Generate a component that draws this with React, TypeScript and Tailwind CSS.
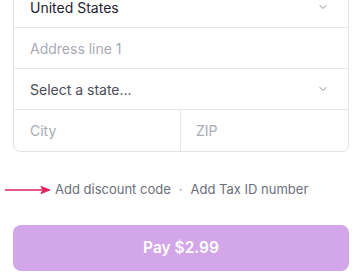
import { ChevronDown } from "lucide-react";

function Row({ children, last = false }: { children: React.ReactNode; last?: boolean }) {
  return (
    <div className={`h-[41px] flex items-center ${last ? "" : "border-b border-[#e6e7ea]"}`}>
      {children}
    </div>
  );
}

export default function App() {
  return (
    <div
      className="w-[364px] h-[274px] overflow-hidden bg-white"
      style={{ fontFamily: "Inter, 'Noto Sans', sans-serif" }}
    >
      <div className="-mt-[14px] ml-[13px] w-[336px]">
        {/* Address card */}
        <div className="border border-[#e3e4e8] rounded-b-[7px] text-[14px]">
          <Row>
            <div className="flex-1 pl-[16px] text-[#1f2330]">United States</div>
            <ChevronDown className="mr-[19px] text-[#8a8d99]" size={12} strokeWidth={2} />
          </Row>
          <Row>
            <div className="flex-1 pl-[16px] text-[#a8abb5]">Address line 1</div>
          </Row>
          <Row>
            <div className="flex-1 pl-[16px] text-[#4a4d5a]">Select a state...</div>
            <ChevronDown className="mr-[19px] text-[#8a8d99]" size={12} strokeWidth={2} />
          </Row>
          <Row last>
            <div className="w-[167px] h-full flex items-center pl-[16px] border-r border-[#e6e7ea] text-[#a8abb5]">
              City
            </div>
            <div className="flex-1 pl-[15px] text-[#a8abb5]">ZIP</div>
          </Row>
        </div>

        {/* Links */}
        <div className="relative mt-[28px] h-[20px] flex items-center text-[13px] text-[#6b6e7b]">
          <svg
            className="absolute -left-[8px] top-[5px]"
            width="46"
            height="10"
            viewBox="0 0 46 10"
          >
            <line x1="0" y1="5" x2="42" y2="5" stroke="#e0245e" strokeWidth="1.6" />
            <path d="M36 1.5 L45 5 L36 8.5 L38 5 Z" fill="#e0245e" stroke="#e0245e" strokeWidth="1" strokeLinejoin="round" />
          </svg>
          <span className="ml-[42px]">Add discount code</span>
          <span className="mx-[8px] text-[#9a9ca6]">·</span>
          <span>Add Tax ID number</span>
        </div>

        {/* Pay button */}
        <button className="mt-[25px] w-[336px] h-[46px] rounded-[8px] bg-[#d2a6e9] text-white text-[15.5px] font-semibold">
          Pay $2.99
        </button>
      </div>
    </div>
  );
}
